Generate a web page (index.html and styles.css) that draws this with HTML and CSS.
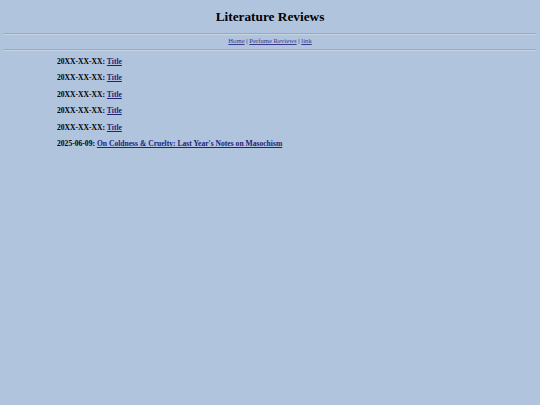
FILE: index.html
```html
<!DOCTYPE html>
<html>
<head>
<meta charset="utf-8">
<title>Literature Reviews</title>
<link rel="stylesheet" href="styles.css">
</head>
<body>
<h1 class="title">Literature Reviews</h1>
<hr class="rule">
<nav class="nav"><a href="#">Home</a> | <a href="#">Perfume Reviews</a> | <a href="#">link</a></nav>
<hr class="rule">
<ul class="reviews">
<li><b>20XX-XX-XX:</b> <a href="#">Title</a></li>
<li><b>20XX-XX-XX:</b> <a href="#">Title</a></li>
<li><b>20XX-XX-XX:</b> <a href="#">Title</a></li>
<li><b>20XX-XX-XX:</b> <a href="#">Title</a></li>
<li><b>20XX-XX-XX:</b> <a href="#">Title</a></li>
<li><b>2025-06-09:</b> <a href="#">On Coldness &amp; Cruelty: Last Year's Notes on Masochism</a></li>
</ul>
</body>
</html>
```
FILE: styles.css
```css
html, body {
  background: #b0c4de;
}
body {
  margin: 4px;
  font-family: "Liberation Serif", "Times New Roman", serif;
  color: #000;
}
a {
  color: #22227a;
}
.title {
  font-size: 13.3px;
  line-height: 15px;
  text-align: center;
  margin: 4.5px 0 9.5px;
}
.rule {
  border: none;
  border-top: 1px solid #98a8bc;
  border-bottom: 1px solid #c8d4e4;
  margin: 0;
  height: 0;
}
.nav {
  font-size: 6.7px;
  line-height: 8px;
  text-align: center;
  padding: 2px 0 4px;
}
.nav a {
  color: #3a3a8c;
}
.reviews {
  list-style: none;
  margin: 5.5px 0 0;
  padding: 0 0 0 53px;
  font-size: 7.6px;
  font-weight: bold;
}
.reviews li {
  line-height: 9px;
  margin-bottom: 7.6px;
}
```
